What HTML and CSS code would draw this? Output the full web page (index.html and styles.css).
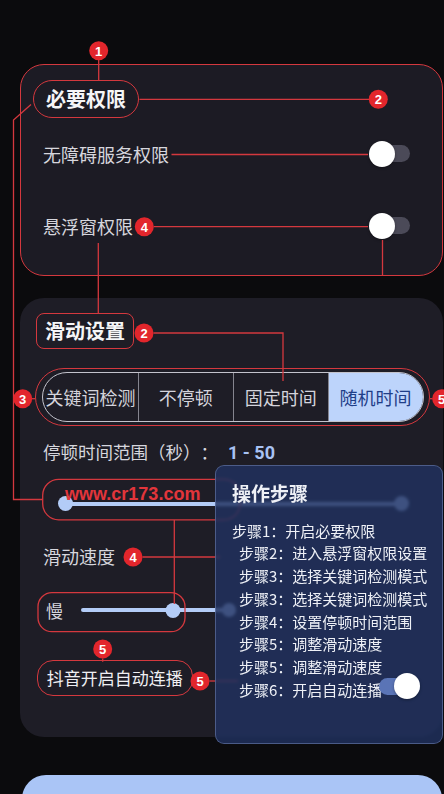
FILE: index.html
```html
<!DOCTYPE html>
<html>
<head>
  <meta charset="utf-8">
  <title>滑动设置</title>
  <link rel="stylesheet" href="styles.css">
</head>
<body>
  <div class="screen">

    <section class="card card-perm">
      <div class="tag tag-round">必要权限</div>
      <div class="perm-list">
        <div class="perm-row">
          <span>无障碍服务权限</span>
          <span class="switch"></span>
        </div>
        <div class="perm-row">
          <span>悬浮窗权限</span>
          <span class="switch"></span>
        </div>
      </div>
    </section>

    <section class="card card-slide">
      <div class="tag tag-box">滑动设置</div>

      <div class="seg-frame">
        <div class="seg">
          <span>关键词检测</span>
          <span>不停顿</span>
          <span>固定时间</span>
          <span class="active">随机时间</span>
        </div>
      </div>

      <div class="range-label">停顿时间范围（秒）：<b>1 - 50</b></div>

      <div class="range-row">
        <div class="slider">
          <span class="knob"></span>
          <span class="knob"></span>
        </div>
        <span class="url-mark">www.cr173.com</span>
      </div>

      <div class="speed-label">滑动速度</div>

      <div class="slow-row">
        <span>慢</span>
        <div class="speed-track">
          <span class="knob" style="left: 62.4%"></span>
          <span class="knob knob-end"></span>
        </div>
      </div>

      <div class="tag tag-auto">抖音开启自动连播</div>
    </section>

    <div class="next-card"></div>

    <!-- annotation lines and numbered markers -->
    <svg class="notes" width="444" height="794" viewBox="0 0 444 794">
      <g fill="none" stroke="#d4383e" stroke-width="1.3">
        <path d="M98.7 60V80"/>
        <path d="M139.5 99.3H369"/>
        <path d="M31 104.5L13.5 120V499.5H42.7"/>
        <path d="M171.5 154.5H368"/>
        <path d="M153.8 226.7H368"/>
        <path d="M98.3 243V313.3"/>
        <path d="M382.5 240V276"/>
        <path d="M153.5 333H283V381"/>
        <path d="M32 398.7H35"/>
        <path d="M430 398.7H432.5"/>
        <path d="M174.3 520V604"/>
        <path d="M142.5 557H220"/>
        <path d="M102.7 658.5V661.7"/>
        <path d="M209.5 681H238"/>
        <rect x="42.7" y="479.3" width="197.3" height="40.5" rx="16"/>
        <rect x="38" y="592.7" width="147" height="39" rx="14"/>
      </g>
      <g class="marks">
        <circle cx="98.7" cy="50.7" r="9.5"/><text x="98.7" y="51.2">1</text>
        <circle cx="378.3" cy="99.3" r="9.5"/><text x="378.3" y="99.8">2</text>
        <circle cx="144.3" cy="226.7" r="9.5"/><text x="144.3" y="227.2">4</text>
        <circle cx="144" cy="333" r="9.5"/><text x="144" y="333.5">2</text>
        <circle cx="22.7" cy="398.7" r="9.5"/><text x="22.7" y="399.2">3</text>
        <circle cx="441.7" cy="398.7" r="9.5"/><text x="441.7" y="399.2">5</text>
        <circle cx="133" cy="557" r="9.5"/><text x="133" y="557.5">4</text>
        <circle cx="102.7" cy="649" r="9.5"/><text x="102.7" y="649.5">5</text>
        <circle cx="200" cy="681" r="9.5"/><text x="200" y="681.5">5</text>
      </g>
    </svg>

    <aside class="steps">
      <h3>操作步骤</h3>
      <ol>
        <li>步骤1：开启必要权限</li>
        <li>步骤2：进入悬浮窗权限设置</li>
        <li>步骤3：选择关键词检测模式</li>
        <li>步骤3：选择关键词检测模式</li>
        <li>步骤4：设置停顿时间范围</li>
        <li>步骤5：调整滑动速度</li>
        <li>步骤5：调整滑动速度</li>
        <li class="with-switch">步骤6：开启自动连播<span class="switch on"></span></li>
      </ol>
    </aside>

  </div>
</body>
</html>
```

FILE: styles.css
```css
* {
  box-sizing: border-box;
}
body {
  margin: 0;
  background: #0b0b0d;
  font-family: "Noto Sans CJK SC", "Noto Sans", sans-serif;
  color: #d6d6dd;
  text-spacing-trim: space-all;
}
.screen {
  position: relative;
  width: 444px;
  height: 794px;
  overflow: hidden;
  padding: 64px 1px 0 20px;
}
.card {
  border-radius: 24px;
  display: flex;
  flex-direction: column;
  align-items: flex-start;
}
.card-perm {
  height: 212px;
  border: 1.5px solid #d4383e;
  background: #1c1b24;
  padding-top: 14.5px;
}
.tag {
  color: #f5f5f7;
  font-weight: 700;
  font-size: 20px;
  line-height: 36px;
  border: 1.5px solid #d4383e;
}
.tag-round {
  border-radius: 20px;
  padding: 0 12px;
  margin-left: 12px;
}
.perm-list {
  align-self: stretch;
  display: flex;
  flex-direction: column;
  gap: 32px;
  margin-top: 16px;
}
.perm-row {
  display: flex;
  align-items: center;
  justify-content: space-between;
  height: 40px;
  padding: 0 32.5px 0 22px;
  font-size: 18px;
}
.switch {
  position: relative;
  width: 41px;
  height: 17px;
  border-radius: 9px;
  background: #4b4a58;
}
.switch::after {
  content: "";
  position: absolute;
  left: 0;
  top: -4.5px;
  width: 26px;
  height: 26px;
  border-radius: 50%;
  background: #fff;
  box-shadow: 0 1px 3px rgba(0, 0, 0, .35);
}
.switch.on {
  background: #5a74b6;
}
.switch.on::after {
  left: auto;
  right: 0;
}

.card-slide {
  height: 439px;
  margin-top: 22px;
  background: #1e1d26;
  padding: 15px 13px 0 0;
}
.tag-box {
  border-radius: 8px;
  padding: 0 8px;
  margin-left: 16px;
  line-height: 34px;
}
.seg-frame {
  align-self: stretch;
  margin: 19px 0 0 15px;
  border: 1.5px solid #d4383e;
  border-radius: 30px;
  padding: 2.5px 5.5px 3.5px 6px;
}
.seg {
  display: grid;
  grid-template-columns: repeat(4, 1fr);
  height: 50px;
  border: 1px solid #c3c3cc;
  border-radius: 25px;
  overflow: hidden;
}
.seg span {
  display: flex;
  align-items: center;
  justify-content: center;
  font-size: 18px;
  color: #d4d4dc;
  border-left: 1px solid #85858f;
}
.seg span:first-child {
  border-left: none;
}
.seg .active {
  background: #bdd4fb;
  color: #1f3e88;
}
.range-label {
  margin: 14px 0 0 23px;
  font-size: 17.5px;
  line-height: 24px;
}
.range-label b {
  margin-left: 10px;
  font: 700 18px Roboto, sans-serif;
  color: #a8c2f3;
}
.range-row {
  position: relative;
  align-self: stretch;
  height: 41px;
  margin-top: 13px;
  padding: 19px 0 0 37.5px;
}
.slider {
  display: flex;
  justify-content: space-between;
  align-items: center;
  width: 351px;
  height: 15px;
  background: linear-gradient(#b3ccf7, #b3ccf7) center / calc(100% - 14px) 4px no-repeat;
}
.knob {
  width: 15px;
  height: 15px;
  border-radius: 50%;
  background: #b3ccf7;
}
.url-mark {
  position: absolute;
  left: 45px;
  top: 5.5px;
  font: 700 18px/22px "Liberation Sans", sans-serif;
  color: #e2353b;
}
.speed-label {
  margin: 26px 0 0 23px;
  font-size: 18px;
  line-height: 24px;
}
.slow-row {
  display: flex;
  align-items: center;
  height: 39px;
  margin: 22.7px 0 0 26px;
  font-size: 17px;
}
.speed-track {
  position: relative;
  width: 148px;
  height: 4px;
  margin-left: 18px;
  border-radius: 2px;
  background: #b3ccf7;
}
.speed-track .knob {
  position: absolute;
  top: -5.5px;
  transform: translateX(-50%);
}
.speed-track .knob-end {
  left: 100%;
  width: 14px;
  height: 14px;
  top: -5px;
}
.tag-auto {
  margin: 30px 0 0 16.7px;
  font-size: 17px;
  font-weight: 400;
  line-height: 34px;
  padding: 0 9px;
  border-radius: 16px;
  color: #efeff2;
}

.next-card {
  height: 40px;
  margin: 38px 1px 0 2px;
  border-radius: 24px 24px 0 0;
  background: #aac5f6;
}

.notes {
  position: absolute;
  left: 0;
  top: 0;
  z-index: 1;
  pointer-events: none;
}
.marks circle {
  fill: #e2262c;
}
.marks text {
  font: 700 13px "Liberation Sans", sans-serif;
  fill: #fff;
  text-anchor: middle;
  dominant-baseline: central;
}

.steps {
  position: absolute;
  left: 215px;
  top: 465px;
  width: 228px;
  height: 279px;
  z-index: 2;
  padding: 14px 0 0 16px;
  background: rgba(32, 50, 98, .8);
  border: 1px solid rgba(120, 140, 190, .5);
  border-radius: 9px;
  backdrop-filter: blur(1.5px);
  color: #eef0f6;
}
.steps h3 {
  margin: 0;
  font-size: 19px;
  line-height: 26px;
  font-weight: 700;
}
.steps ol {
  list-style: none;
  margin: 13.5px 0 0;
  padding: 0;
  font-size: 15px;
  line-height: 22.8px;
}
.steps li + li {
  padding-left: 7px;
}
.steps .with-switch {
  display: flex;
  align-items: center;
}
.with-switch .switch {
  margin: -8px 0 0 -3px;
}
```
